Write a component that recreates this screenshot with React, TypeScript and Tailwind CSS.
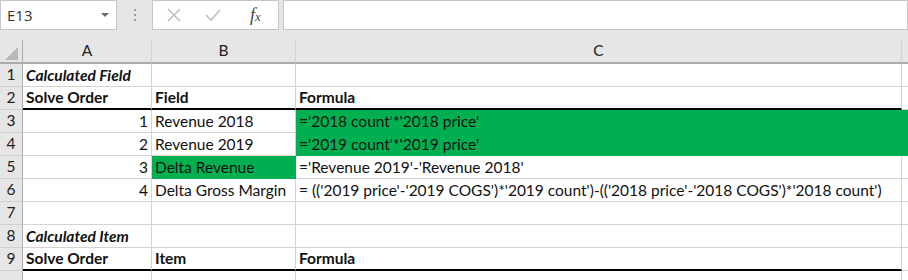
import React from "react";

const font = { fontFamily: "Lato, 'Open Sans', sans-serif" };

type Cell = {
  text?: string;
  bold?: boolean;
  italic?: boolean;
  right?: boolean;
  green?: boolean;
};

const rows: { n: number; label: string; a: Cell; b: Cell; c: Cell; thick?: boolean; greenD?: boolean }[] = [
  { n: 1, label: "1", a: { text: "Calculated Field", bold: true, italic: true }, b: {}, c: {} },
  { n: 2, label: "2", a: { text: "Solve Order", bold: true }, b: { text: "Field", bold: true }, c: { text: "Formula", bold: true }, thick: true },
  { n: 3, label: "3", a: { text: "1", right: true }, b: { text: "Revenue 2018" }, c: { text: "='2018 count'*'2018 price'", green: true }, greenD: true },
  { n: 4, label: "4", a: { text: "2", right: true }, b: { text: "Revenue 2019" }, c: { text: "='2019 count'*'2019 price'", green: true }, greenD: true },
  { n: 5, label: "5", a: { text: "3", right: true }, b: { text: "Delta Revenue", green: true }, c: { text: "='Revenue 2019'-'Revenue 2018'" } },
  { n: 6, label: "6", a: { text: "4", right: true }, b: { text: "Delta Gross Margin" }, c: { text: "= (('2019 price'-'2019 COGS')*'2019 count')-(('2018 price'-'2018 COGS')*'2018 count')" } },
  { n: 7, label: "7", a: {}, b: {}, c: {} },
  { n: 8, label: "8", a: { text: "Calculated Item", bold: true, italic: true }, b: {}, c: {} },
  { n: 9, label: "9", a: { text: "Solve Order", bold: true }, b: { text: "Item", bold: true }, c: { text: "Formula", bold: true }, thick: true },
  { n: 10, label: "", a: {}, b: {}, c: {} },
];

function DataCell({ cell, thick }: { cell: Cell; thick?: boolean }) {
  const base = "h-[23px] flex items-end pb-[2px] px-[3px] text-[15.5px] leading-[18px] whitespace-nowrap overflow-visible text-[#111]";
  const border = thick
    ? "border-b-2 border-b-black"
    : cell.green
      ? "border-b border-b-[#00b050]"
      : "border-b border-b-[#d4d4d4]";
  const rborder = cell.green ? "border-r border-r-[#00b050]" : "border-r border-r-[#d4d4d4]";
  return (
    <div
      className={`${base} ${border} ${rborder} ${cell.green ? "bg-[#00b050]" : "bg-white"} ${cell.right ? "justify-end" : "justify-start"} ${cell.bold ? "font-bold" : ""} ${cell.italic ? "italic" : ""}`}
      style={font}
    >
      {cell.text}
    </div>
  );
}

export default function App() {
  return (
    <div className="w-[908px] h-[280px] overflow-hidden bg-[#e6e6e6] relative" style={font}>
      {/* Formula bar */}
      <div className="h-[40px] flex items-start">
        <div className="w-[117px] h-[30px] bg-white border border-[#c6c6c6] flex items-center justify-between pl-[6px] pr-[7px]">
          <span className="text-[15px] text-[#333]" style={{ fontFamily: "'Open Sans', sans-serif" }}>E13</span>
          <svg width="8" height="5" viewBox="0 0 8 5"><path d="M0 0 L8 0 L4 4 Z" fill="#6b6b6b" /></svg>
        </div>
        <div className="w-[35px] h-[30px] flex flex-col items-center justify-center gap-[3px]">
          <div className="w-[2px] h-[2px] bg-[#9a9a9a]" />
          <div className="w-[2px] h-[2px] bg-[#9a9a9a]" />
          <div className="w-[2px] h-[2px] bg-[#9a9a9a]" />
        </div>
        <div className="w-[127px] h-[30px] bg-white border border-[#c6c6c6] flex items-center">
          <div className="w-[40px] flex justify-center pl-[2px]">
            <svg width="14" height="14" viewBox="0 0 14 14"><path d="M1 1 L13 13 M13 1 L1 13" stroke="#bdbdbd" strokeWidth="1.5" /></svg>
          </div>
          <div className="w-[40px] flex justify-center">
            <svg width="16" height="14" viewBox="0 0 16 14"><path d="M1 7 L6 12 L15 2" stroke="#bdbdbd" strokeWidth="1.6" fill="none" /></svg>
          </div>
          <div className="w-[45px] flex justify-center">
            <span className="text-[18px] italic text-[#444] leading-none" style={{ fontFamily: "'Liberation Serif', serif" }}>
              f<span className="text-[13px]">x</span>
            </span>
          </div>
        </div>
        <div className="ml-[4px] flex-1 h-[30px] bg-white border border-[#c6c6c6]" />
      </div>

      {/* Sheet */}
      <div className="grid grid-cols-[23px_129px_144px_606px_1fr]">
        {/* header row */}
        <div className="h-[24px] border-b-2 border-b-[#ababab] border-r border-r-[#ababab] bg-[#e6e6e6] relative">
          <svg className="absolute left-[5px] top-[7px]" width="13" height="13" viewBox="0 0 13 13"><path d="M13 0 L13 13 L0 13 Z" fill="#b8b8b8" /></svg>
        </div>
        <div className="h-[24px] border-b-2 border-b-[#ababab] border-r border-r-[#d0d0d0] flex items-center justify-center text-[15.5px] text-[#222]">A</div>
        <div className="h-[24px] border-b-2 border-b-[#ababab] border-r border-r-[#d0d0d0] flex items-center justify-center text-[15.5px] text-[#222]">B</div>
        <div className="h-[24px] border-b-2 border-b-[#ababab] border-r border-r-[#d0d0d0] flex items-center justify-center text-[15.5px] text-[#222]">C</div>
        <div className="h-[24px] border-b-2 border-b-[#ababab]" />

        {rows.map((r) => (
          <React.Fragment key={r.n}>
            <div className="h-[23px] border-b border-b-[#d0d0d0] border-r border-r-[#ababab] bg-[#e6e6e6] flex items-center justify-center text-[15.5px] text-[#222]">
              {r.label}
            </div>
            <DataCell cell={r.a} thick={r.thick} />
            <DataCell cell={r.b} thick={r.thick} />
            <DataCell cell={r.c} thick={r.thick} />
            <div className={`h-[23px] ${r.greenD ? "bg-[#00b050]" : "bg-white border-b border-b-[#d4d4d4]"}`} />
          </React.Fragment>
        ))}
      </div>
    </div>
  );
}
